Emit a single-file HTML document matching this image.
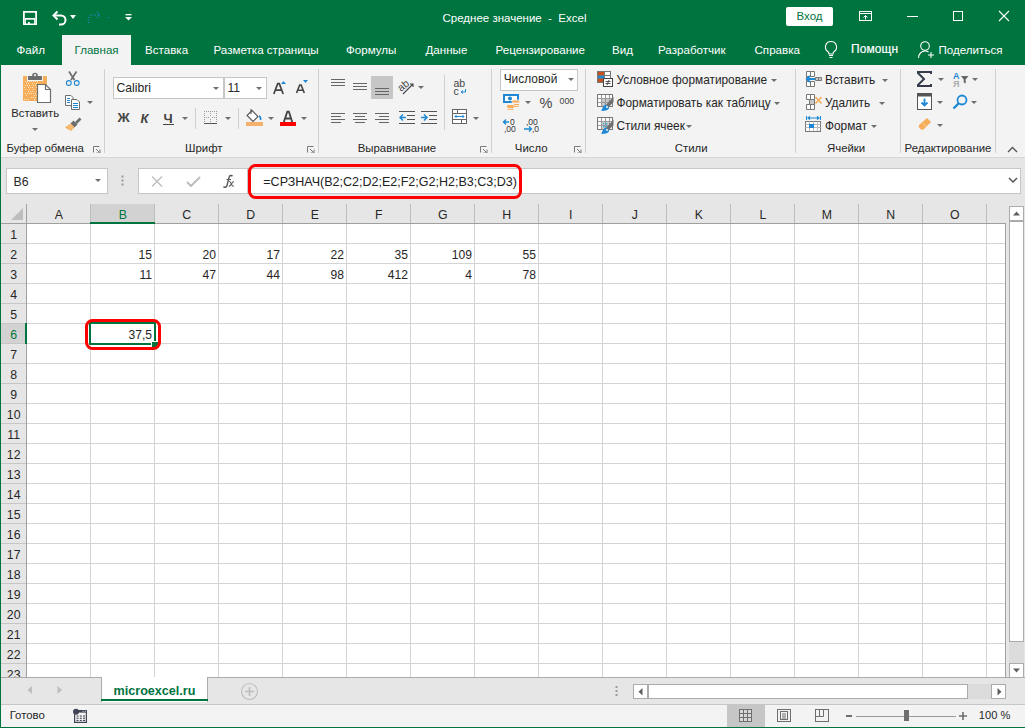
<!DOCTYPE html>
<html><head><meta charset="utf-8"><style>
html,body{margin:0;padding:0;width:1025px;height:728px;overflow:hidden;background:#f3f3f3}
body{position:relative;font-family:"Liberation Sans",sans-serif}
.t{position:absolute;white-space:nowrap;line-height:1;font-family:"Liberation Sans",sans-serif}
.r{position:absolute;display:block}
</style></head><body>
<div class="r" style="left:0px;top:0px;width:1025px;height:65px;background:#00743f"></div>
<svg class="r" style="left:23px;top:11px;" width="14" height="14" viewBox="0 0 14 14"><path d="M0.9 0.9h12.2v12.4h-12.2z" fill="none" stroke="#fff" stroke-width="1.8"/><rect x="2" y="7" width="10" height="1.7" fill="#fff"/><rect x="2" y="8" width="0.9" height="5" fill="#fff"/><rect x="11.1" y="8" width="0.9" height="5" fill="#fff"/><rect x="5" y="11" width="1.8" height="2" fill="#fff"/></svg>
<svg class="r" style="left:50px;top:9px;" width="20" height="18" viewBox="0 0 20 18"><path d="M4 6.5h7a4.5 4.5 0 0 1 0 9h-2" fill="none" stroke="#fff" stroke-width="2"/><path d="M7.5 2.5l-4 4 4 4" fill="none" stroke="#fff" stroke-width="2"/></svg>
<svg class="r" style="left:70px;top:15px;" width="7" height="5" viewBox="0 0 7 5"><path d="M0 0h6l-3 4z" fill="#fff"/></svg>
<svg class="r" style="left:86px;top:10px;" width="18" height="16" viewBox="0 0 18 16"><path d="M3 13c-2-3 0-9 6-8h4" fill="none" stroke="#2a8ad4" stroke-width="1.2" stroke-dasharray="1 1.5"/><path d="M11 2l3 3-3 3" fill="none" stroke="#2a8ad4" stroke-width="1.2" stroke-dasharray="1 1.5"/></svg>
<div class="r" style="left:108px;top:17px;width:1px;height:1px;background:#2a8ad4"></div>
<svg class="r" style="left:125px;top:14px;" width="8" height="8" viewBox="0 0 8 8"><rect x="0.5" y="0" width="6" height="1.3" fill="#fff"/><path d="M0 3h7l-3.5 3.5z" fill="#fff"/></svg>
<div class="t" style="left:442.50px;top:13.07px;font-size:11.5px;color:#fff;font-weight:normal;">Среднее значение &nbsp;- &nbsp;Excel</div>
<div class="r" style="left:786px;top:7px;width:47px;height:19px;background:#fff;border-radius:2px"></div>
<div class="t" style="left:609.50px;width:400px;text-align:center;top:11.27px;font-size:11.5px;color:#00743f;font-weight:normal;">Вход</div>
<svg class="r" style="left:858px;top:10px;" width="16" height="12" viewBox="0 0 16 12"><rect x="1.5" y="1.5" width="12" height="9" fill="none" stroke="#fff" stroke-width="1"/><path d="M1.5 3.5h12" stroke="#fff"/><path d="M7.5 9.5v-4M5.5 7.5l2-2 2 2" fill="none" stroke="#fff"/></svg>
<div class="r" style="left:907px;top:16px;width:11px;height:1px;background:#fff"></div>
<div class="r" style="left:953px;top:11px;width:10px;height:10px;border:1px solid #fff;box-sizing:border-box"></div>
<svg class="r" style="left:998px;top:10px;" width="12" height="12" viewBox="0 0 12 12"><path d="M1 1l10 10M11 1l-10 10" stroke="#fff" stroke-width="1.1"/></svg>
<div class="r" style="left:62px;top:35px;width:69px;height:30px;background:#f3f3f3"></div>
<div class="t" style="left:16.50px;top:44.18px;font-size:11.6px;color:#fff;font-weight:normal;">Файл</div>
<div class="t" style="left:74.50px;top:44.18px;font-size:11.6px;color:#00743f;font-weight:normal;">Главная</div>
<div class="t" style="left:145.00px;top:44.18px;font-size:11.6px;color:#fff;font-weight:normal;">Вставка</div>
<div class="t" style="left:213.50px;top:44.18px;font-size:11.6px;color:#fff;font-weight:normal;">Разметка страницы</div>
<div class="t" style="left:346.00px;top:44.18px;font-size:11.6px;color:#fff;font-weight:normal;">Формулы</div>
<div class="t" style="left:425.50px;top:44.18px;font-size:11.6px;color:#fff;font-weight:normal;">Данные</div>
<div class="t" style="left:495.50px;top:44.18px;font-size:11.6px;color:#fff;font-weight:normal;">Рецензирование</div>
<div class="t" style="left:612.00px;top:44.18px;font-size:11.6px;color:#fff;font-weight:normal;">Вид</div>
<div class="t" style="left:658.00px;top:44.18px;font-size:11.6px;color:#fff;font-weight:normal;">Разработчик</div>
<div class="t" style="left:754.50px;top:44.18px;font-size:11.6px;color:#fff;font-weight:normal;">Справка</div>
<svg class="r" style="left:823px;top:40px;" width="16" height="19" viewBox="0 0 16 19"><path d="M8 1.5a5.5 5.5 0 0 0-3.2 10c.7.6 1.2 1.5 1.2 2.5h4c0-1 .5-1.9 1.2-2.5A5.5 5.5 0 0 0 8 1.5z" fill="none" stroke="#fff" stroke-width="1.1"/><path d="M6 15.5h4M6.5 17.5h3" stroke="#fff" stroke-width="1.1"/></svg>
<div class="t" style="left:851.00px;top:43.93px;font-size:11.9px;color:#fff;font-weight:normal;-webkit-text-stroke:0.2px #fff;letter-spacing:0.15px">Помощн</div>
<svg class="r" style="left:917px;top:40px;" width="19" height="19" viewBox="0 0 19 19"><circle cx="8" cy="6" r="4.3" fill="none" stroke="#fff" stroke-width="1.1"/><path d="M1.5 18c0-4 3-7 6.5-7 1.5 0 2.5.4 3.5 1" fill="none" stroke="#fff" stroke-width="1.1"/><path d="M14 12v6M11 15h6" stroke="#fff" stroke-width="1.1"/></svg>
<div class="t" style="left:938.50px;top:44.18px;font-size:11.6px;color:#fff;font-weight:normal;">Поделиться</div>
<div class="r" style="left:1px;top:65px;width:1024px;height:92px;background:#f3f3f3"></div>
<div class="r" style="left:0px;top:157px;width:1025px;height:1px;background:#d5d5d5"></div>
<div class="r" style="left:104px;top:69px;width:1px;height:84px;background:#d0d0d0"></div>
<div class="r" style="left:318px;top:69px;width:1px;height:84px;background:#d0d0d0"></div>
<div class="r" style="left:491px;top:69px;width:1px;height:84px;background:#d0d0d0"></div>
<div class="r" style="left:585px;top:69px;width:1px;height:84px;background:#d0d0d0"></div>
<div class="r" style="left:795px;top:69px;width:1px;height:84px;background:#d0d0d0"></div>
<div class="r" style="left:900px;top:69px;width:1px;height:84px;background:#d0d0d0"></div>
<div class="r" style="left:995px;top:69px;width:1px;height:84px;background:#d0d0d0"></div>
<div class="t" style="left:6.50px;top:143.35px;font-size:11.4px;color:#262626;font-weight:normal;">Буфер обмена</div>
<div class="t" style="left:185.00px;top:143.35px;font-size:11.4px;color:#262626;font-weight:normal;">Шрифт</div>
<div class="t" style="left:357.70px;top:143.35px;font-size:11.4px;color:#262626;font-weight:normal;">Выравнивание</div>
<div class="t" style="left:514.80px;top:143.35px;font-size:11.4px;color:#262626;font-weight:normal;">Число</div>
<div class="t" style="left:674.80px;top:143.35px;font-size:11.4px;color:#262626;font-weight:normal;">Стили</div>
<div class="t" style="left:827.00px;top:143.35px;font-size:11.4px;color:#262626;font-weight:normal;">Ячейки</div>
<div class="t" style="left:904.60px;top:143.35px;font-size:11.4px;color:#262626;font-weight:normal;">Редактирование</div>
<svg class="r" style="left:93px;top:146px;" width="8" height="7" viewBox="0 0 8 7"><path d="M0.5 6.5v-6h6" fill="none" stroke="#7a7a7a" stroke-width="1"/><path d="M3 3l3.5 3.5M7 3.5v3.5h-3.5" fill="none" stroke="#7a7a7a" stroke-width="1"/></svg>
<svg class="r" style="left:307px;top:146px;" width="8" height="7" viewBox="0 0 8 7"><path d="M0.5 6.5v-6h6" fill="none" stroke="#7a7a7a" stroke-width="1"/><path d="M3 3l3.5 3.5M7 3.5v3.5h-3.5" fill="none" stroke="#7a7a7a" stroke-width="1"/></svg>
<svg class="r" style="left:480px;top:146px;" width="8" height="7" viewBox="0 0 8 7"><path d="M0.5 6.5v-6h6" fill="none" stroke="#7a7a7a" stroke-width="1"/><path d="M3 3l3.5 3.5M7 3.5v3.5h-3.5" fill="none" stroke="#7a7a7a" stroke-width="1"/></svg>
<svg class="r" style="left:574px;top:146px;" width="8" height="7" viewBox="0 0 8 7"><path d="M0.5 6.5v-6h6" fill="none" stroke="#7a7a7a" stroke-width="1"/><path d="M3 3l3.5 3.5M7 3.5v3.5h-3.5" fill="none" stroke="#7a7a7a" stroke-width="1"/></svg>
<svg class="r" style="left:1007px;top:146px;" width="11" height="7" viewBox="0 0 11 7"><path d="M1 6l4.5-4.5 4.5 4.5" fill="none" stroke="#555" stroke-width="1.4"/></svg>
<svg class="r" style="left:20px;top:70px;" width="34" height="34" viewBox="0 0 34 34">
<rect x="3" y="6" width="24" height="25" rx="1" fill="#f7ae5b"/>
<g fill="#fde6c4"><rect x="5" y="11" width="1" height="1"/><rect x="7" y="11" width="1" height="1"/><rect x="9" y="11" width="1" height="1"/><rect x="11" y="11" width="1" height="1"/><rect x="13" y="11" width="1" height="1"/><rect x="15" y="11" width="1" height="1"/><rect x="17" y="11" width="1" height="1"/><rect x="6" y="13" width="1" height="1"/><rect x="8" y="13" width="1" height="1"/><rect x="12" y="13" width="1" height="1"/><rect x="16" y="13" width="1" height="1"/><rect x="5" y="15" width="1" height="1"/><rect x="7" y="15" width="1" height="1"/><rect x="9" y="15" width="1" height="1"/><rect x="13" y="15" width="1" height="1"/><rect x="15" y="15" width="1" height="1"/><rect x="17" y="15" width="1" height="1"/><rect x="4" y="17" width="1" height="1"/><rect x="8" y="17" width="1" height="1"/><rect x="10" y="17" width="1" height="1"/><rect x="12" y="17" width="1" height="1"/><rect x="16" y="17" width="1" height="1"/><rect x="5" y="19" width="1" height="1"/><rect x="9" y="19" width="1" height="1"/><rect x="13" y="19" width="1" height="1"/><rect x="17" y="19" width="1" height="1"/><rect x="8" y="21" width="1" height="1"/><rect x="10" y="21" width="1" height="1"/><rect x="12" y="21" width="1" height="1"/><rect x="16" y="21" width="1" height="1"/><rect x="5" y="23" width="1" height="1"/><rect x="7" y="23" width="1" height="1"/><rect x="9" y="23" width="1" height="1"/><rect x="11" y="23" width="1" height="1"/><rect x="13" y="23" width="1" height="1"/><rect x="15" y="23" width="1" height="1"/><rect x="17" y="23" width="1" height="1"/><rect x="6" y="25" width="1" height="1"/><rect x="14" y="25" width="1" height="1"/><rect x="16" y="25" width="1" height="1"/><rect x="11" y="27" width="1" height="1"/><rect x="13" y="27" width="1" height="1"/><rect x="15" y="27" width="1" height="1"/><rect x="4" y="29" width="1" height="1"/><rect x="6" y="29" width="1" height="1"/><rect x="8" y="29" width="1" height="1"/><rect x="14" y="29" width="1" height="1"/></g>
<rect x="7" y="5" width="16" height="6" fill="#f3f3f3"/>
<rect x="8" y="6" width="14" height="4" rx="0.5" fill="#6d6d6d"/>
<circle cx="15" cy="5.5" r="2.8" fill="#6d6d6d"/>
<circle cx="15" cy="5.2" r="1.1" fill="#f3f3f3"/>
<path d="M17.5 14.5h8l5 5v13h-13z" fill="#fff" stroke="#6d6d6d" stroke-width="1.2"/>
<path d="M25.5 14.5v5h5" fill="none" stroke="#6d6d6d" stroke-width="1.2"/>
</svg>
<div class="t" style="left:11.30px;top:108.43px;font-size:11.3px;color:#262626;font-weight:normal;">Вставить</div>
<svg class="r" style="left:32px;top:128px;" width="6" height="3" viewBox="0 0 6 3"><path d="M0 0h6l-3 3z" fill="#6e6e6e"/></svg>
<svg class="r" style="left:64px;top:70px;" width="18" height="18" viewBox="0 0 18 18"><path d="M5 1.5l5.5 8.5M12.5 1.5l-5.5 8.5" stroke="#6d6d6d" stroke-width="1.7"/><circle cx="4.8" cy="13" r="2.4" fill="none" stroke="#1e88d4" stroke-width="1.1"/><circle cx="12.7" cy="13" r="2.4" fill="none" stroke="#1e88d4" stroke-width="1.1"/></svg>
<svg class="r" style="left:64px;top:94px;" width="17" height="16" viewBox="0 0 17 16"><path d="M1.5 1.5h5.5l2 2v8h-7.5z" fill="#fff" stroke="#6d6d6d"/><path d="M7.5 5.5h5.5l2.5 2.5v7.5h-8z" fill="#fff" stroke="#6d6d6d"/><path d="M3 4.5h3M3 6.5h3M3 8.5h3M9 9.5h5M9 11.5h5M9 13.5h5" stroke="#1e88d4" stroke-width="1"/></svg>
<svg class="r" style="left:86.5px;top:101px;" width="6" height="3" viewBox="0 0 6 3"><path d="M0 0h6l-3 3z" fill="#6e6e6e"/></svg>
<svg class="r" style="left:64px;top:116px;" width="18" height="16" viewBox="0 0 18 16"><path d="M16.5 2.5l-4.5 4.5" stroke="#6d6d6d" stroke-width="2.6"/><path d="M9.5 4.5l4 4-3 3-4-4z" fill="#6d6d6d"/><path d="M6.5 7.5l4 4-3.5 3.5-6-3.5z" fill="#f6ae5a"/><path d="M4.2 9.8l2.5 4M6 8.3l2.5 4.5" stroke="#fbd7a6" stroke-width="0.8"/></svg>
<div class="r" style="left:113px;top:77px;width:111px;height:22px;background:#fff;border:1px solid #c6c6c6;box-sizing:border-box"></div>
<div class="r" style="left:224px;top:77px;width:43px;height:22px;background:#fff;border:1px solid #c6c6c6;box-sizing:border-box"></div>
<div class="t" style="left:116.50px;top:81.97px;font-size:12.2px;color:#262626;font-weight:normal;">Calibri</div>
<div class="t" style="left:227.50px;top:81.97px;font-size:12.2px;color:#262626;font-weight:normal;">11</div>
<svg class="r" style="left:213px;top:86.5px;" width="6" height="3" viewBox="0 0 6 3"><path d="M0 0h6l-3 3z" fill="#6e6e6e"/></svg>
<svg class="r" style="left:256px;top:86.5px;" width="6" height="3" viewBox="0 0 6 3"><path d="M0 0h6l-3 3z" fill="#6e6e6e"/></svg>
<svg class="r" style="left:272px;top:79px;" width="16" height="16" viewBox="0 0 16 16"><path d="M1.8 15l3.9-10.3h1.6L11.2 15M3.4 11.2h6.2" fill="none" stroke="#444" stroke-width="1.7"/><path d="M9 5l2.5-3 2.5 3z" fill="#1e88d4"/></svg>
<svg class="r" style="left:295px;top:79px;" width="15" height="15" viewBox="0 0 15 15"><path d="M1.5 14l3.2-8h1.4l3.2 8M2.9 11.2h5" fill="none" stroke="#444" stroke-width="1.6"/><path d="M8 1h5l-2.5 3z" fill="#1e88d4"/></svg>
<div class="t" style="left:117.50px;top:111.07px;font-size:13.5px;color:#444;font-weight:bold;">Ж</div>
<div class="t" style="left:140.50px;top:111.50px;font-size:13px;color:#444;font-weight:bold;font-style:italic">К</div>
<div class="t" style="left:163.50px;top:111.50px;font-size:13px;color:#444;font-weight:bold;">Ч</div>
<div class="r" style="left:163px;top:124px;width:11px;height:1px;background:#444"></div>
<svg class="r" style="left:181.5px;top:117px;" width="6" height="3" viewBox="0 0 6 3"><path d="M0 0h6l-3 3z" fill="#6e6e6e"/></svg>
<div class="r" style="left:195px;top:108px;width:1px;height:21px;background:#d0d0d0"></div>
<svg class="r" style="left:203px;top:110px;" width="15" height="15" viewBox="0 0 15 15"><g fill="#9a9a9a"><rect x="1" y="1" width="1" height="1"/><rect x="3" y="1" width="1" height="1"/><rect x="5" y="1" width="1" height="1"/><rect x="7" y="1" width="1" height="1"/><rect x="9" y="1" width="1" height="1"/><rect x="11" y="1" width="1" height="1"/><rect x="13" y="1" width="1" height="1"/><rect x="1" y="3" width="1" height="1"/><rect x="1" y="5" width="1" height="1"/><rect x="1" y="7" width="1" height="1"/><rect x="1" y="9" width="1" height="1"/><rect x="1" y="11" width="1" height="1"/><rect x="13" y="3" width="1" height="1"/><rect x="13" y="5" width="1" height="1"/><rect x="13" y="7" width="1" height="1"/><rect x="13" y="9" width="1" height="1"/><rect x="13" y="11" width="1" height="1"/><rect x="7" y="3" width="1" height="1"/><rect x="7" y="5" width="1" height="1"/><rect x="7" y="9" width="1" height="1"/><rect x="7" y="11" width="1" height="1"/><rect x="3" y="7" width="1" height="1"/><rect x="5" y="7" width="1" height="1"/><rect x="9" y="7" width="1" height="1"/><rect x="11" y="7" width="1" height="1"/></g><rect x="1" y="13" width="13" height="1" fill="#555"/></svg>
<svg class="r" style="left:224.5px;top:117px;" width="6" height="3" viewBox="0 0 6 3"><path d="M0 0h6l-3 3z" fill="#6e6e6e"/></svg>
<div class="r" style="left:238px;top:108px;width:1px;height:21px;background:#d0d0d0"></div>
<svg class="r" style="left:245px;top:108px;" width="19" height="19" viewBox="0 0 19 19"><path d="M7 2.5l6 6-5 5-6-6z" fill="#fff" stroke="#555" stroke-width="1.1"/><path d="M6 1v5" stroke="#555" stroke-width="1.1"/><path d="M14 8c1.5 1 2 2.5 1.5 4" fill="none" stroke="#1e88d4" stroke-width="1.6"/><rect x="1" y="14" width="17" height="4" fill="#f4b06a"/></svg>
<svg class="r" style="left:267.5px;top:117px;" width="6" height="3" viewBox="0 0 6 3"><path d="M0 0h6l-3 3z" fill="#6e6e6e"/></svg>
<svg class="r" style="left:279px;top:109px;" width="18" height="18" viewBox="0 0 18 18"><path d="M4.8 13l3.5-10.3h1.6L13.2 13M6.2 9.5h5.6" fill="none" stroke="#444" stroke-width="1.8"/><rect x="1" y="13" width="16" height="4" fill="#f00"/></svg>
<svg class="r" style="left:301px;top:117px;" width="6" height="3" viewBox="0 0 6 3"><path d="M0 0h6l-3 3z" fill="#6e6e6e"/></svg>
<svg class="r" style="left:331px;top:79px;" width="14" height="9" viewBox="0 0 14 9"><rect x="0" y="0" width="14" height="1" fill="#666"/><rect x="0" y="3" width="14" height="1" fill="#666"/><rect x="0" y="6" width="14" height="1" fill="#666"/></svg>
<svg class="r" style="left:353px;top:83px;" width="14" height="9" viewBox="0 0 14 9"><rect x="0" y="0" width="14" height="1" fill="#666"/><rect x="0" y="3" width="14" height="1" fill="#666"/><rect x="0" y="6" width="14" height="1" fill="#666"/></svg>
<div class="r" style="left:371px;top:76px;width:22px;height:23px;background:#c6c6c6"></div>
<svg class="r" style="left:375px;top:88px;" width="14" height="9" viewBox="0 0 14 9"><rect x="0" y="0" width="14" height="1" fill="#666"/><rect x="0" y="3" width="14" height="1" fill="#666"/><rect x="0" y="6" width="14" height="1" fill="#666"/></svg>
<svg class="r" style="left:398px;top:79px;" width="26" height="16" viewBox="0 0 26 16"><text x="0" y="0" font-family="Liberation Sans" font-size="10.5" fill="#444" transform="translate(3,13) rotate(-40)">ab</text><path d="M5 15l10-10M12 5h3v3" fill="none" stroke="#444" stroke-width="1.1"/></svg>
<svg class="r" style="left:418px;top:86px;" width="6" height="3" viewBox="0 0 6 3"><path d="M0 0h6l-3 3z" fill="#6e6e6e"/></svg>
<svg class="r" style="left:331px;top:113px;" width="14" height="12" viewBox="0 0 14 12"><rect x="0" y="0" width="14" height="1" fill="#666"/><rect x="0" y="3" width="10" height="1" fill="#666"/><rect x="0" y="6" width="14" height="1" fill="#666"/><rect x="0" y="9" width="10" height="1" fill="#666"/></svg>
<svg class="r" style="left:353px;top:113px;" width="14" height="12" viewBox="0 0 14 12"><rect x="0" y="0" width="14" height="1" fill="#666"/><rect x="2" y="3" width="10" height="1" fill="#666"/><rect x="0" y="6" width="14" height="1" fill="#666"/><rect x="2" y="9" width="10" height="1" fill="#666"/></svg>
<svg class="r" style="left:375px;top:113px;" width="14" height="12" viewBox="0 0 14 12"><rect x="0" y="0" width="14" height="1" fill="#666"/><rect x="4" y="3" width="10" height="1" fill="#666"/><rect x="0" y="6" width="14" height="1" fill="#666"/><rect x="4" y="9" width="10" height="1" fill="#666"/></svg>
<svg class="r" style="left:399px;top:111px;" width="17" height="14" viewBox="0 0 17 14"><rect x="0" y="0" width="16" height="1" fill="#555"/><rect x="8" y="4" width="8" height="1" fill="#555"/><rect x="8" y="8" width="8" height="1" fill="#555"/><rect x="0" y="12" width="16" height="1" fill="#555"/><path d="M1 6.5h6M4 3.5l-3 3 3 3" fill="none" stroke="#1e88d4" stroke-width="1.5"/></svg>
<svg class="r" style="left:421px;top:111px;" width="17" height="14" viewBox="0 0 17 14"><rect x="0" y="0" width="16" height="1" fill="#555"/><rect x="8" y="4" width="8" height="1" fill="#555"/><rect x="8" y="8" width="8" height="1" fill="#555"/><rect x="0" y="12" width="16" height="1" fill="#555"/><path d="M0 6.5h6M3 3.5l3 3-3 3" fill="none" stroke="#1e88d4" stroke-width="1.5"/></svg>
<div class="r" style="left:444px;top:75px;width:1px;height:55px;background:#d0d0d0"></div>
<div class="t" style="left:453.50px;top:78.11px;font-size:10.5px;color:#444;font-weight:normal;">ab</div>
<div class="t" style="left:453.50px;top:85.61px;font-size:10.5px;color:#444;font-weight:normal;">c</div>
<svg class="r" style="left:460px;top:89px;" width="7" height="6" viewBox="0 0 7 6"><path d="M5.5 0v3h-4M3 1.5l-2 1.5 2 1.5" fill="none" stroke="#1e88d4" stroke-width="1"/></svg>
<svg class="r" style="left:452px;top:109px;" width="16" height="16" viewBox="0 0 16 16"><rect x="0.5" y="0.5" width="14" height="14" fill="#fff" stroke="#666"/><path d="M0.5 4.5h14M0.5 10.5h14M5.5 0.5v4M9.5 10.5v4" stroke="#666"/><path d="M3 7.5h9M4.5 6l-1.5 1.5 1.5 1.5M10.5 6l1.5 1.5-1.5 1.5" fill="none" stroke="#1e88d4"/></svg>
<svg class="r" style="left:473px;top:117px;" width="6" height="3" viewBox="0 0 6 3"><path d="M0 0h6l-3 3z" fill="#6e6e6e"/></svg>
<div class="r" style="left:500px;top:69px;width:78px;height:22px;background:#fff;border:1px solid #c6c6c6;box-sizing:border-box"></div>
<div class="t" style="left:503.70px;top:74.13px;font-size:11.9px;color:#262626;font-weight:normal;">Числовой</div>
<svg class="r" style="left:567.5px;top:78px;" width="6" height="3" viewBox="0 0 6 3"><path d="M0 0h6l-3 3z" fill="#6e6e6e"/></svg>
<svg class="r" style="left:502px;top:93px;" width="18" height="18" viewBox="0 0 18 18"><rect x="2" y="2" width="14" height="7" fill="#fff" stroke="#1e88d4" stroke-width="2"/><path d="M1 1h4l-4 3zM17 1h-4l4 3z" fill="#1e88d4"/><circle cx="8" cy="5.5" r="2" fill="#1e88d4"/><rect x="10" y="7" width="7.5" height="3" rx="1.2" fill="#f6ae5a" stroke="#f3f3f3" stroke-width="0.8"/><rect x="12" y="11" width="5" height="1" fill="#f6ae5a"/><rect x="12" y="12.8" width="5" height="1" fill="#f6ae5a"/><rect x="5" y="12" width="7" height="3" rx="1.2" fill="#f6ae5a"/><rect x="5.5" y="15.8" width="6" height="1" fill="#f6ae5a"/></svg>
<svg class="r" style="left:524.5px;top:101px;" width="6" height="3" viewBox="0 0 6 3"><path d="M0 0h6l-3 3z" fill="#6e6e6e"/></svg>
<div class="t" style="left:539.50px;top:95.53px;font-size:14.5px;color:#444;font-weight:normal;">%</div>
<div class="t" style="left:559.50px;top:97.35px;font-size:8.8px;color:#444;font-weight:normal;">000</div>
<svg class="r" style="left:502px;top:117px;" width="17" height="17" viewBox="0 0 17 17"><path d="M1 5h6M4 2.5l-2.5 2.5 2.5 2.5" fill="none" stroke="#1e88d4" stroke-width="1.3"/></svg>
<div class="t" style="left:510.00px;top:117.80px;font-size:8.5px;color:#333;font-weight:normal;">0</div>
<div class="t" style="left:504.00px;top:124.80px;font-size:8.5px;color:#333;font-weight:normal;">,00</div>
<div class="t" style="left:526.00px;top:117.80px;font-size:8.5px;color:#333;font-weight:normal;">,00</div>
<svg class="r" style="left:524px;top:125px;" width="10" height="8" viewBox="0 0 10 8"><path d="M0 4h7M5 1.5l2.5 2.5-2.5 2.5" fill="none" stroke="#1e88d4" stroke-width="1.3"/></svg>
<div class="t" style="left:532.00px;top:124.80px;font-size:8.5px;color:#333;font-weight:normal;">,0</div>
<svg class="r" style="left:597px;top:71px;" width="17" height="17" viewBox="0 0 17 17"><rect x="0.5" y="0.5" width="13" height="11" fill="#fff" stroke="#777"/><rect x="1" y="1" width="6" height="3" fill="#c5501f"/><rect x="1" y="4" width="6" height="3" fill="#1e88d4"/><rect x="1" y="7" width="6" height="4" fill="#c5501f"/><path d="M7.5 0.5v11M0.5 4.5h13M0.5 7.5h13" stroke="#777"/><rect x="6.5" y="7.5" width="9" height="8" fill="#fff" stroke="#444"/><path d="M8.5 10.5h5M8.5 12.5h5M12 9l-2 5" stroke="#444" stroke-width="0.9"/></svg>
<div class="t" style="left:616.50px;top:75.47px;font-size:11.85px;color:#262626;font-weight:normal;">Условное форматирование</div>
<svg class="r" style="left:770.8px;top:79px;" width="6" height="3" viewBox="0 0 6 3"><path d="M0 0h6l-3 3z" fill="#6e6e6e"/></svg>
<svg class="r" style="left:597px;top:94px;" width="17" height="17" viewBox="0 0 17 17"><rect x="0.5" y="0.5" width="15" height="12" fill="#fff" stroke="#777"/><rect x="5" y="5" width="7" height="7" fill="#c8c8c8"/><path d="M4.5 1v11.5M8.5 1v11.5M12.5 1v11.5M1 4.5h14.5M1 8.5h14.5" stroke="#9a9a9a" stroke-width="1.1"/><path d="M16.5 2.5v5.5l-5 5.5-2.5-2.5z" fill="#6e6e6e"/><path d="M8.5 10.5l3.8 3.2c-.8 2.2-3.5 3.3-8 3.3 1-3 2.3-5.8 4.2-6.5z" fill="#1e88d4"/><circle cx="10" cy="13" r="0.9" fill="#fff"/></svg>
<div class="t" style="left:616.50px;top:98.17px;font-size:11.85px;color:#262626;font-weight:normal;">Форматировать как таблицу</div>
<svg class="r" style="left:774px;top:102px;" width="6" height="3" viewBox="0 0 6 3"><path d="M0 0h6l-3 3z" fill="#6e6e6e"/></svg>
<svg class="r" style="left:597px;top:117px;" width="17" height="17" viewBox="0 0 17 17"><rect x="0.5" y="0.5" width="15" height="12" fill="#fff" stroke="#777"/><rect x="5" y="5" width="7" height="7" fill="#d0d0d0"/><g fill="#3fb0d8"><rect x="6" y="6" width="1.5" height="1.5"/><rect x="9" y="6" width="1.5" height="1.5"/><rect x="6" y="9" width="1.5" height="1.5"/><rect x="9" y="9" width="1.5" height="1.5"/></g><path d="M4.5 1v11.5M8.5 1v11.5M12.5 1v11.5M1 4.5h14.5M1 8.5h14.5" stroke="#9a9a9a" stroke-width="1.1"/><path d="M16.5 2.5v5.5l-5 5.5-2.5-2.5z" fill="#6e6e6e"/><path d="M8.5 10.5l3.8 3.2c-.8 2.2-3.5 3.3-8 3.3 1-3 2.3-5.8 4.2-6.5z" fill="#1e88d4"/><circle cx="10" cy="13" r="0.9" fill="#fff"/></svg>
<div class="t" style="left:616.50px;top:120.87px;font-size:11.85px;color:#262626;font-weight:normal;">Стили ячеек</div>
<svg class="r" style="left:686.3px;top:125px;" width="6" height="3" viewBox="0 0 6 3"><path d="M0 0h6l-3 3z" fill="#6e6e6e"/></svg>
<svg class="r" style="left:805px;top:70px;" width="18" height="18" viewBox="0 0 18 18"><path d="M1.5 1.5h4v5h-4zM5.5 1.5h4v5h-4zM1.5 11.5h4v5h-4zM5.5 11.5h4v5h-4zM1.5 6.5v5" fill="#fff" stroke="#777"/><path d="M10.5 7.5h3v3h-3zM13.5 7.5h3v3h-3z" fill="#c8c8c8" stroke="#777"/><path d="M2 9h8M4.8 6l-3 3 3 3" fill="none" stroke="#1e88d4" stroke-width="1.8"/></svg>
<div class="t" style="left:825.00px;top:75.17px;font-size:11.85px;color:#262626;font-weight:normal;">Вставить</div>
<svg class="r" style="left:882px;top:79px;" width="6" height="3" viewBox="0 0 6 3"><path d="M0 0h6l-3 3z" fill="#6e6e6e"/></svg>
<svg class="r" style="left:805px;top:93px;" width="18" height="18" viewBox="0 0 18 18"><path d="M1.5 1.5h4v5h-4zM5.5 1.5h4v5h-4zM1.5 11.5h4v5h-4zM5.5 11.5h4v5h-4z" fill="#fff" stroke="#777"/><path d="M4.5 6.5h5v5h-5z" fill="#c8c8c8" stroke="#777"/><path d="M10.5 4l6 6.5M16.5 4l-6 6.5" stroke="#f6ae5a" stroke-width="1.6"/></svg>
<div class="t" style="left:825.00px;top:97.67px;font-size:11.85px;color:#262626;font-weight:normal;">Удалить</div>
<svg class="r" style="left:878.7px;top:102px;" width="6" height="3" viewBox="0 0 6 3"><path d="M0 0h6l-3 3z" fill="#6e6e6e"/></svg>
<svg class="r" style="left:805px;top:116px;" width="18" height="18" viewBox="0 0 18 18"><path d="M1.5 0v4M15.5 0v4" stroke="#1e88d4"/><path d="M3 2h11M5 0.5l-2 1.5 2 1.5M12 0.5l2 1.5-2 1.5" fill="none" stroke="#1e88d4" stroke-width="1.2"/><rect x="0.5" y="5.5" width="15" height="10" fill="#fff" stroke="#777"/><path d="M0.5 8.5h15M0.5 11.5h15M4.5 5.5v10M8.5 5.5v10M12.5 5.5v10" stroke="#bbb"/><rect x="4" y="8" width="5" height="4" fill="#1e88d4"/><path d="M1 15.5h14" stroke="#777"/></svg>
<div class="t" style="left:825.00px;top:120.87px;font-size:11.85px;color:#262626;font-weight:normal;">Формат</div>
<svg class="r" style="left:870.7px;top:125px;" width="6" height="3" viewBox="0 0 6 3"><path d="M0 0h6l-3 3z" fill="#6e6e6e"/></svg>
<svg class="r" style="left:916px;top:71px;" width="17" height="16" viewBox="0 0 17 16"><path d="M1 1h14v2M1 15h14v-2M1.5 1.5l6.5 6.5-6.5 6.5" fill="none" stroke="#353b4a" stroke-width="2"/></svg>
<svg class="r" style="left:938.3px;top:78px;" width="6" height="3" viewBox="0 0 6 3"><path d="M0 0h6l-3 3z" fill="#6e6e6e"/></svg>
<div class="t" style="left:953.00px;top:71.88px;font-size:9px;color:#1e88d4;font-weight:bold;">A</div>
<div class="t" style="left:953.00px;top:79.88px;font-size:9px;color:#aaa;font-weight:bold;">Я</div>
<svg class="r" style="left:961px;top:76px;" width="8" height="8" viewBox="0 0 8 8"><path d="M0 0h7.5l-2.8 3.5v4l-2-1v-3z" fill="#666"/></svg>
<svg class="r" style="left:971.5px;top:78px;" width="6" height="3" viewBox="0 0 6 3"><path d="M0 0h6l-3 3z" fill="#6e6e6e"/></svg>
<svg class="r" style="left:917px;top:93px;" width="16" height="17" viewBox="0 0 16 17"><rect x="0.5" y="0.5" width="14" height="16" fill="#fff" stroke="#555"/><rect x="0.5" y="0.5" width="14" height="3" fill="#555"/><path d="M7.5 5.5v7M4.5 9.5l3 3 3-3" fill="none" stroke="#1e88d4" stroke-width="1.8"/></svg>
<svg class="r" style="left:936.5px;top:101px;" width="6" height="3" viewBox="0 0 6 3"><path d="M0 0h6l-3 3z" fill="#6e6e6e"/></svg>
<svg class="r" style="left:952px;top:94px;" width="16" height="16" viewBox="0 0 16 16"><circle cx="10" cy="6" r="4.5" fill="none" stroke="#1e88d4" stroke-width="1.8"/><path d="M7 9l-5.5 5.5" stroke="#1e88d4" stroke-width="2.4"/></svg>
<svg class="r" style="left:971px;top:101px;" width="6" height="3" viewBox="0 0 6 3"><path d="M0 0h6l-3 3z" fill="#6e6e6e"/></svg>
<svg class="r" style="left:918px;top:117px;" width="14" height="14" viewBox="0 0 14 14"><path d="M9 1l4 4-7 7c-1 1-2.5 1-3.5 0l-1-1c-1-1-1-2.5 0-3.5z" fill="#f6ae5a"/><path d="M4.5 6l4 4" stroke="#fbd39a" stroke-width="1"/></svg>
<svg class="r" style="left:936.5px;top:124px;" width="6" height="3" viewBox="0 0 6 3"><path d="M0 0h6l-3 3z" fill="#6e6e6e"/></svg>
<div class="r" style="left:1px;top:158px;width:1024px;height:519px;background:#e6e6e6"></div>
<div class="r" style="left:6px;top:168px;width:102px;height:26px;background:#fff;border:1px solid #c6c6c6;box-sizing:border-box"></div>
<div class="t" style="left:13.60px;top:176.09px;font-size:12.3px;color:#262626;font-weight:normal;">B6</div>
<svg class="r" style="left:95px;top:179px;" width="6" height="3" viewBox="0 0 6 3"><path d="M0 0h6l-3 3z" fill="#6e6e6e"/></svg>
<svg class="r" style="left:121px;top:175px;" width="4" height="12" viewBox="0 0 4 12"><rect x="0.5" y="0.5" width="2" height="2" fill="#9a9a9a"/><rect x="0.5" y="4.5" width="2" height="2" fill="#9a9a9a"/><rect x="0.5" y="8.5" width="2" height="2" fill="#9a9a9a"/></svg>
<div class="r" style="left:138px;top:168px;width:110px;height:26px;background:#fff;border:1px solid #c6c6c6;box-sizing:border-box"></div>
<svg class="r" style="left:151px;top:176px;" width="12" height="11" viewBox="0 0 12 11"><path d="M1 0.5l10 10M11 0.5l-10 10" stroke="#bdbdbd" stroke-width="1.3"/></svg>
<svg class="r" style="left:186px;top:176px;" width="15" height="11" viewBox="0 0 15 11"><path d="M1 6l4 4 9-9" fill="none" stroke="#bdbdbd" stroke-width="2"/></svg>
<svg class="r" style="left:220px;top:173px;" width="16" height="16" viewBox="0 0 16 16"><path d="M12.5 3.2C11.5 2 9.5 2.2 9 4.5L7 12.5C6.5 14.5 4.5 14.8 3.5 13.5" fill="none" stroke="#5a5a5a" stroke-width="1.4"/><path d="M6.5 6.5h4.5" stroke="#5a5a5a" stroke-width="1.1"/><path d="M9 8.5c1 0 1.5.5 2 1.8l1.2 2.2c.4.6.8.8 1.5.6M14 8.5c-.5 0-1.5.8-2.5 2.2L10 12.8c-.3.3-.8.3-1.2 0" fill="none" stroke="#5a5a5a" stroke-width="1.1"/></svg>
<div class="r" style="left:248px;top:168px;width:773px;height:26px;background:#fff;border:1px solid #c6c6c6;box-sizing:border-box"></div>
<div class="t" style="left:263.30px;top:176.40px;font-size:12.52px;color:#222;font-weight:normal;">=СРЗНАЧ(B2;C2;D2;E2;F2;G2;H2;B3;C3;D3)</div>
<svg class="r" style="left:1008px;top:177px;" width="10" height="7" viewBox="0 0 10 7"><path d="M1 1l4 4 4-4" fill="none" stroke="#555" stroke-width="1.5"/></svg>
<div class="r" style="left:27px;top:224px;width:978px;height:453px;background:#fff"></div>
<div class="r" style="left:91px;top:204px;width:63px;height:19px;background:#d2d2d2"></div>
<div class="r" style="left:1px;top:324px;width:25px;height:19px;background:#d2d2d2"></div>
<svg class="r" style="left:0px;top:0px;pointer-events:none" width="1025" height="728" viewBox="0 0 1025 728"><path d="M90.5 204V223" stroke="#bdbdbd"/><path d="M90.5 224V677" stroke="#d4d4d4"/><path d="M154.5 204V223" stroke="#bdbdbd"/><path d="M154.5 224V677" stroke="#d4d4d4"/><path d="M218.5 204V223" stroke="#bdbdbd"/><path d="M218.5 224V677" stroke="#d4d4d4"/><path d="M282.5 204V223" stroke="#bdbdbd"/><path d="M282.5 224V677" stroke="#d4d4d4"/><path d="M346.5 204V223" stroke="#bdbdbd"/><path d="M346.5 224V677" stroke="#d4d4d4"/><path d="M410.5 204V223" stroke="#bdbdbd"/><path d="M410.5 224V677" stroke="#d4d4d4"/><path d="M474.5 204V223" stroke="#bdbdbd"/><path d="M474.5 224V677" stroke="#d4d4d4"/><path d="M538.5 204V223" stroke="#bdbdbd"/><path d="M538.5 224V677" stroke="#d4d4d4"/><path d="M602.5 204V223" stroke="#bdbdbd"/><path d="M602.5 224V677" stroke="#d4d4d4"/><path d="M666.5 204V223" stroke="#bdbdbd"/><path d="M666.5 224V677" stroke="#d4d4d4"/><path d="M730.5 204V223" stroke="#bdbdbd"/><path d="M730.5 224V677" stroke="#d4d4d4"/><path d="M794.5 204V223" stroke="#bdbdbd"/><path d="M794.5 224V677" stroke="#d4d4d4"/><path d="M858.5 204V223" stroke="#bdbdbd"/><path d="M858.5 224V677" stroke="#d4d4d4"/><path d="M922.5 204V223" stroke="#bdbdbd"/><path d="M922.5 224V677" stroke="#d4d4d4"/><path d="M986.5 204V223" stroke="#bdbdbd"/><path d="M986.5 224V677" stroke="#d4d4d4"/><path d="M27 243.5H1005" stroke="#d4d4d4"/><path d="M1 243.5H26" stroke="#c6c6c6"/><path d="M27 263.5H1005" stroke="#d4d4d4"/><path d="M1 263.5H26" stroke="#c6c6c6"/><path d="M27 283.5H1005" stroke="#d4d4d4"/><path d="M1 283.5H26" stroke="#c6c6c6"/><path d="M27 303.5H1005" stroke="#d4d4d4"/><path d="M1 303.5H26" stroke="#c6c6c6"/><path d="M27 323.5H1005" stroke="#d4d4d4"/><path d="M1 323.5H26" stroke="#c6c6c6"/><path d="M27 343.5H1005" stroke="#d4d4d4"/><path d="M1 343.5H26" stroke="#c6c6c6"/><path d="M27 363.5H1005" stroke="#d4d4d4"/><path d="M1 363.5H26" stroke="#c6c6c6"/><path d="M27 383.5H1005" stroke="#d4d4d4"/><path d="M1 383.5H26" stroke="#c6c6c6"/><path d="M27 403.5H1005" stroke="#d4d4d4"/><path d="M1 403.5H26" stroke="#c6c6c6"/><path d="M27 423.5H1005" stroke="#d4d4d4"/><path d="M1 423.5H26" stroke="#c6c6c6"/><path d="M27 443.5H1005" stroke="#d4d4d4"/><path d="M1 443.5H26" stroke="#c6c6c6"/><path d="M27 463.5H1005" stroke="#d4d4d4"/><path d="M1 463.5H26" stroke="#c6c6c6"/><path d="M27 483.5H1005" stroke="#d4d4d4"/><path d="M1 483.5H26" stroke="#c6c6c6"/><path d="M27 503.5H1005" stroke="#d4d4d4"/><path d="M1 503.5H26" stroke="#c6c6c6"/><path d="M27 523.5H1005" stroke="#d4d4d4"/><path d="M1 523.5H26" stroke="#c6c6c6"/><path d="M27 543.5H1005" stroke="#d4d4d4"/><path d="M1 543.5H26" stroke="#c6c6c6"/><path d="M27 563.5H1005" stroke="#d4d4d4"/><path d="M1 563.5H26" stroke="#c6c6c6"/><path d="M27 583.5H1005" stroke="#d4d4d4"/><path d="M1 583.5H26" stroke="#c6c6c6"/><path d="M27 603.5H1005" stroke="#d4d4d4"/><path d="M1 603.5H26" stroke="#c6c6c6"/><path d="M27 623.5H1005" stroke="#d4d4d4"/><path d="M1 623.5H26" stroke="#c6c6c6"/><path d="M27 643.5H1005" stroke="#d4d4d4"/><path d="M1 643.5H26" stroke="#c6c6c6"/><path d="M27 663.5H1005" stroke="#d4d4d4"/><path d="M1 663.5H26" stroke="#c6c6c6"/><path d="M26.5 204V677" stroke="#9f9f9f"/><path d="M1 223.5H1005" stroke="#9f9f9f"/><path d="M1005.5 223V677" stroke="#9f9f9f"/></svg>
<div class="r" style="left:90px;top:222px;width:65px;height:2px;background:#00743f"></div>
<div class="r" style="left:25px;top:323px;width:2px;height:21px;background:#00743f"></div>
<svg class="r" style="left:11px;top:208px;" width="13" height="12" viewBox="0 0 13 12"><path d="M12 0v12h-12z" fill="#bdbdbd"/></svg>
<div class="t" style="left:-141.20px;width:400px;text-align:center;top:209.09px;font-size:12.3px;color:#262626;font-weight:normal;">A</div>
<div class="t" style="left:-77.20px;width:400px;text-align:center;top:209.09px;font-size:12.3px;color:#00743f;font-weight:normal;">B</div>
<div class="t" style="left:-13.20px;width:400px;text-align:center;top:209.09px;font-size:12.3px;color:#262626;font-weight:normal;">C</div>
<div class="t" style="left:50.80px;width:400px;text-align:center;top:209.09px;font-size:12.3px;color:#262626;font-weight:normal;">D</div>
<div class="t" style="left:114.80px;width:400px;text-align:center;top:209.09px;font-size:12.3px;color:#262626;font-weight:normal;">E</div>
<div class="t" style="left:178.80px;width:400px;text-align:center;top:209.09px;font-size:12.3px;color:#262626;font-weight:normal;">F</div>
<div class="t" style="left:242.80px;width:400px;text-align:center;top:209.09px;font-size:12.3px;color:#262626;font-weight:normal;">G</div>
<div class="t" style="left:306.80px;width:400px;text-align:center;top:209.09px;font-size:12.3px;color:#262626;font-weight:normal;">H</div>
<div class="t" style="left:370.80px;width:400px;text-align:center;top:209.09px;font-size:12.3px;color:#262626;font-weight:normal;">I</div>
<div class="t" style="left:434.80px;width:400px;text-align:center;top:209.09px;font-size:12.3px;color:#262626;font-weight:normal;">J</div>
<div class="t" style="left:498.80px;width:400px;text-align:center;top:209.09px;font-size:12.3px;color:#262626;font-weight:normal;">K</div>
<div class="t" style="left:562.80px;width:400px;text-align:center;top:209.09px;font-size:12.3px;color:#262626;font-weight:normal;">L</div>
<div class="t" style="left:626.80px;width:400px;text-align:center;top:209.09px;font-size:12.3px;color:#262626;font-weight:normal;">M</div>
<div class="t" style="left:690.80px;width:400px;text-align:center;top:209.09px;font-size:12.3px;color:#262626;font-weight:normal;">N</div>
<div class="t" style="left:754.80px;width:400px;text-align:center;top:209.09px;font-size:12.3px;color:#262626;font-weight:normal;">O</div>
<div class="t" style="left:-186.30px;width:400px;text-align:center;top:228.99px;font-size:12.3px;color:#262626;font-weight:normal;">1</div>
<div class="t" style="left:-186.30px;width:400px;text-align:center;top:248.99px;font-size:12.3px;color:#262626;font-weight:normal;">2</div>
<div class="t" style="left:-186.30px;width:400px;text-align:center;top:268.99px;font-size:12.3px;color:#262626;font-weight:normal;">3</div>
<div class="t" style="left:-186.30px;width:400px;text-align:center;top:288.99px;font-size:12.3px;color:#262626;font-weight:normal;">4</div>
<div class="t" style="left:-186.30px;width:400px;text-align:center;top:308.99px;font-size:12.3px;color:#262626;font-weight:normal;">5</div>
<div class="t" style="left:-186.30px;width:400px;text-align:center;top:328.99px;font-size:12.3px;color:#00743f;font-weight:normal;">6</div>
<div class="t" style="left:-186.30px;width:400px;text-align:center;top:348.99px;font-size:12.3px;color:#262626;font-weight:normal;">7</div>
<div class="t" style="left:-186.30px;width:400px;text-align:center;top:368.99px;font-size:12.3px;color:#262626;font-weight:normal;">8</div>
<div class="t" style="left:-186.30px;width:400px;text-align:center;top:388.99px;font-size:12.3px;color:#262626;font-weight:normal;">9</div>
<div class="t" style="left:-186.30px;width:400px;text-align:center;top:408.99px;font-size:12.3px;color:#262626;font-weight:normal;">10</div>
<div class="t" style="left:-186.30px;width:400px;text-align:center;top:428.99px;font-size:12.3px;color:#262626;font-weight:normal;">11</div>
<div class="t" style="left:-186.30px;width:400px;text-align:center;top:448.99px;font-size:12.3px;color:#262626;font-weight:normal;">12</div>
<div class="t" style="left:-186.30px;width:400px;text-align:center;top:468.99px;font-size:12.3px;color:#262626;font-weight:normal;">13</div>
<div class="t" style="left:-186.30px;width:400px;text-align:center;top:488.99px;font-size:12.3px;color:#262626;font-weight:normal;">14</div>
<div class="t" style="left:-186.30px;width:400px;text-align:center;top:508.99px;font-size:12.3px;color:#262626;font-weight:normal;">15</div>
<div class="t" style="left:-186.30px;width:400px;text-align:center;top:528.99px;font-size:12.3px;color:#262626;font-weight:normal;">16</div>
<div class="t" style="left:-186.30px;width:400px;text-align:center;top:548.99px;font-size:12.3px;color:#262626;font-weight:normal;">17</div>
<div class="t" style="left:-186.30px;width:400px;text-align:center;top:568.99px;font-size:12.3px;color:#262626;font-weight:normal;">18</div>
<div class="t" style="left:-186.30px;width:400px;text-align:center;top:588.99px;font-size:12.3px;color:#262626;font-weight:normal;">19</div>
<div class="t" style="left:-186.30px;width:400px;text-align:center;top:608.99px;font-size:12.3px;color:#262626;font-weight:normal;">20</div>
<div class="t" style="left:-186.30px;width:400px;text-align:center;top:628.99px;font-size:12.3px;color:#262626;font-weight:normal;">21</div>
<div class="t" style="left:-186.30px;width:400px;text-align:center;top:648.99px;font-size:12.3px;color:#262626;font-weight:normal;">22</div>
<div class="t" style="left:-186.30px;width:400px;text-align:center;top:668.99px;font-size:12.3px;color:#262626;font-weight:normal;">23</div>
<div class="t" style="right:873.00px;top:248.76px;font-size:12.1px;color:#262626;font-weight:normal;">15</div>
<div class="t" style="right:809.00px;top:248.76px;font-size:12.1px;color:#262626;font-weight:normal;">20</div>
<div class="t" style="right:745.00px;top:248.76px;font-size:12.1px;color:#262626;font-weight:normal;">17</div>
<div class="t" style="right:681.00px;top:248.76px;font-size:12.1px;color:#262626;font-weight:normal;">22</div>
<div class="t" style="right:617.00px;top:248.76px;font-size:12.1px;color:#262626;font-weight:normal;">35</div>
<div class="t" style="right:553.00px;top:248.76px;font-size:12.1px;color:#262626;font-weight:normal;">109</div>
<div class="t" style="right:489.00px;top:248.76px;font-size:12.1px;color:#262626;font-weight:normal;">55</div>
<div class="t" style="right:873.00px;top:268.76px;font-size:12.1px;color:#262626;font-weight:normal;">11</div>
<div class="t" style="right:809.00px;top:268.76px;font-size:12.1px;color:#262626;font-weight:normal;">47</div>
<div class="t" style="right:745.00px;top:268.76px;font-size:12.1px;color:#262626;font-weight:normal;">44</div>
<div class="t" style="right:681.00px;top:268.76px;font-size:12.1px;color:#262626;font-weight:normal;">98</div>
<div class="t" style="right:617.00px;top:268.76px;font-size:12.1px;color:#262626;font-weight:normal;">412</div>
<div class="t" style="right:553.00px;top:268.76px;font-size:12.1px;color:#262626;font-weight:normal;">4</div>
<div class="t" style="right:489.00px;top:268.76px;font-size:12.1px;color:#262626;font-weight:normal;">78</div>
<div class="t" style="right:873.00px;top:328.76px;font-size:12.1px;color:#262626;font-weight:normal;">37,5</div>
<div class="r" style="left:89px;top:322px;width:67px;height:23px;border:2px solid #00743f;box-sizing:border-box"></div>
<div class="r" style="left:151px;top:341px;width:6px;height:5px;background:#00743f;border:1px solid #fff;box-sizing:content-box"></div>
<div class="r" style="left:248px;top:164px;width:274px;height:35px;border:3.5px solid #ff0000;border-radius:7.5px;box-sizing:border-box"></div>
<div class="r" style="left:85px;top:319px;width:76px;height:31px;border:3.5px solid #ff0000;border-radius:7.5px;box-sizing:border-box"></div>
<div class="r" style="left:1009px;top:206px;width:15px;height:15px;background:#fff;border:1px solid #ababab;box-sizing:border-box"></div>
<svg class="r" style="left:1013px;top:211px;" width="8" height="5" viewBox="0 0 8 5"><path d="M0 4.5h7l-3.5-4z" fill="#606060"/></svg>
<div class="r" style="left:1009px;top:221px;width:15px;height:421px;background:#fff;border:1px solid #ababab;box-sizing:border-box"></div>
<div class="r" style="left:1009px;top:642px;width:15px;height:21px;background:#dcdcdc"></div>
<div class="r" style="left:1009px;top:663px;width:15px;height:15px;background:#fff;border:1px solid #ababab;box-sizing:border-box"></div>
<svg class="r" style="left:1013px;top:668px;" width="8" height="5" viewBox="0 0 8 5"><path d="M0 0.5h7l-3.5 4z" fill="#606060"/></svg>
<div class="r" style="left:1px;top:677px;width:1024px;height:28px;background:#e6e6e6"></div>
<div class="r" style="left:1px;top:677px;width:1024px;height:1px;background:#ababab"></div>
<div class="r" style="left:1px;top:704px;width:1024px;height:1px;background:#c6c6c6"></div>
<svg class="r" style="left:27px;top:686px;" width="6" height="9" viewBox="0 0 6 9"><path d="M5 0v8l-4.5-4z" fill="#bdbdbd"/></svg>
<svg class="r" style="left:57px;top:686px;" width="6" height="9" viewBox="0 0 6 9"><path d="M0.5 0v8l4.5-4z" fill="#bdbdbd"/></svg>
<div class="r" style="left:101px;top:677px;width:107px;height:25px;background:#fff;border-left:1px solid #ababab;border-right:1px solid #ababab;box-sizing:border-box"></div>
<div class="r" style="left:101px;top:699px;width:107px;height:2px;background:#00743f"></div>
<div class="t" style="left:-45.50px;width:400px;text-align:center;top:684.83px;font-size:12.6px;color:#00743f;font-weight:bold;">microexcel.ru</div>
<svg class="r" style="left:240px;top:682px;" width="19" height="19" viewBox="0 0 19 19"><circle cx="9.5" cy="9.5" r="8" fill="none" stroke="#bdbdbd" stroke-width="1.1"/><path d="M9.5 5v9M5 9.5h9" stroke="#bdbdbd" stroke-width="1.6"/></svg>
<svg class="r" style="left:615px;top:686px;" width="4" height="11" viewBox="0 0 4 11"><rect x="0.5" y="0" width="2" height="2" fill="#9a9a9a"/><rect x="0.5" y="4" width="2" height="2" fill="#9a9a9a"/><rect x="0.5" y="8" width="2" height="2" fill="#9a9a9a"/></svg>
<div class="r" style="left:633px;top:684px;width:15px;height:15px;background:#fff;border:1px solid #ababab;box-sizing:border-box"></div>
<svg class="r" style="left:638px;top:688px;" width="5" height="8" viewBox="0 0 5 8"><path d="M4.5 0v7.5l-4-3.75z" fill="#606060"/></svg>
<div class="r" style="left:648px;top:684px;width:320px;height:15px;background:#fff;border:1px solid #ababab;box-sizing:border-box"></div>
<div class="r" style="left:968px;top:684px;width:23px;height:15px;background:#dcdcdc"></div>
<div class="r" style="left:991px;top:684px;width:15px;height:15px;background:#fff;border:1px solid #ababab;box-sizing:border-box"></div>
<svg class="r" style="left:997px;top:688px;" width="5" height="8" viewBox="0 0 5 8"><path d="M0.5 0v7.5l4-3.75z" fill="#606060"/></svg>
<div class="r" style="left:1px;top:705px;width:1024px;height:22px;background:#f3f3f3"></div>
<div class="t" style="left:9.70px;top:709.65px;font-size:11.4px;color:#262626;font-weight:normal;">Готово</div>
<svg class="r" style="left:72px;top:708px;" width="15" height="15" viewBox="0 0 15 15"><path d="M2.6 4v10.4h11.8V3" fill="none" stroke="#404456" stroke-width="1.2"/><rect x="6" y="2" width="9" height="2.6" fill="#404456"/><rect x="10.5" y="2.8" width="1.2" height="1" fill="#c8c8d0"/><rect x="12.7" y="2.8" width="1.2" height="1" fill="#c8c8d0"/><circle cx="4" cy="3.8" r="3" fill="#404456"/><g fill="#404456"><rect x="4.5" y="7.5" width="2" height="1.1"/><rect x="7.8" y="7.5" width="2" height="1.1"/><rect x="11" y="7.5" width="2" height="1.1"/><rect x="4.5" y="9.7" width="2" height="1.1"/><rect x="7.8" y="9.7" width="2" height="1.1"/><rect x="11" y="9.7" width="2" height="1.1"/><rect x="4.5" y="11.9" width="2" height="1.1"/><rect x="7.8" y="11.9" width="2" height="1.1"/><rect x="11" y="11.9" width="2" height="1.1"/></g></svg>
<div class="r" style="left:727px;top:705px;width:38px;height:22px;background:#c6c6c6"></div>
<svg class="r" style="left:739px;top:709px;" width="13" height="13" viewBox="0 0 13 13"><rect x="0" y="0" width="13" height="13" fill="#6e6e6e"/><g fill="#d8d8d8"><rect x="1" y="1" width="3" height="3"/><rect x="5" y="1" width="3" height="3"/><rect x="9" y="1" width="3" height="3"/><rect x="1" y="5" width="3" height="3"/><rect x="5" y="5" width="3" height="3"/><rect x="9" y="5" width="3" height="3"/><rect x="1" y="9" width="3" height="3"/><rect x="5" y="9" width="3" height="3"/><rect x="9" y="9" width="3" height="3"/></g></svg>
<svg class="r" style="left:777px;top:709px;" width="14" height="13" viewBox="0 0 14 13"><rect x="0.5" y="0.5" width="13" height="12" fill="none" stroke="#6e6e6e"/><rect x="3.5" y="2.5" width="7" height="8" fill="none" stroke="#6e6e6e"/><path d="M5 5h4M5 7h4M5 9h4" stroke="#6e6e6e"/></svg>
<svg class="r" style="left:815px;top:709px;" width="14" height="13" viewBox="0 0 14 13"><rect x="0.5" y="0.5" width="13" height="12" fill="none" stroke="#6e6e6e"/><path d="M0.5 7.5h8v-7M4.5 0.5v7" fill="none" stroke="#6e6e6e"/></svg>
<div class="r" style="left:846px;top:715px;width:6px;height:2px;background:#6e6e6e"></div>
<div class="r" style="left:856px;top:716px;width:100px;height:1px;background:#9a9a9a"></div>
<div class="r" style="left:904px;top:710px;width:5px;height:11px;background:#6e6e6e"></div>
<svg class="r" style="left:959px;top:712px;" width="8" height="8" viewBox="0 0 8 8"><path d="M4 0v8M0 4h8" stroke="#6e6e6e" stroke-width="1.6"/></svg>
<div class="t" style="left:978.80px;top:710.10px;font-size:11.1px;color:#262626;font-weight:normal;">100 %</div>
<div class="r" style="left:0px;top:0px;width:1px;height:728px;background:#00743f"></div>
<div class="r" style="left:0px;top:727px;width:1025px;height:1px;background:#00743f"></div>
</body></html>
